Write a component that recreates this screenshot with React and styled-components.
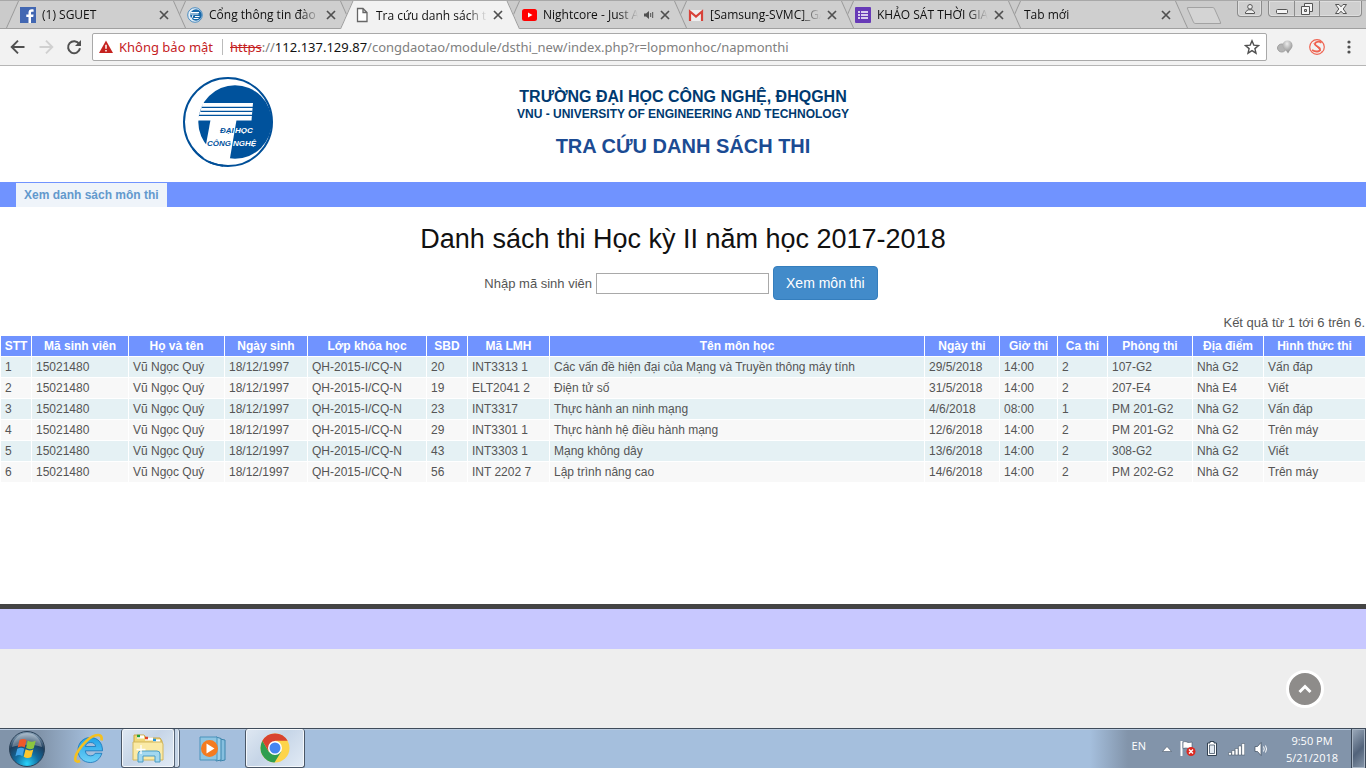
import React from 'react';
import styled, { createGlobalStyle } from 'styled-components';

const Global = createGlobalStyle`
  * { box-sizing: border-box; }
  body { margin: 0; background: #eee; font-family: "Liberation Sans", Arial, sans-serif; color: #555; }
  button, input { font: inherit; }
  button { cursor: pointer; }
`;

const ui = '"Open Sans", "Noto Sans", sans-serif';

const Screen = styled.div`
  min-height: 100vh;
  display: flex;
  flex-direction: column;
  overflow: hidden;
`;

/* ---------- browser frame ---------- */

const TabStrip = styled.div`
  display: flex;
  height: 29px;
  padding: 0 4px 0 6px;
  background: #cbcbcb;
  border-top: 1px solid #a8a8a8;
  border-bottom: 1px solid #a0a0a0;
  font-family: ${ui};
`;

const TabList = styled.div`
  display: flex;
  flex: 1;
  min-width: 0;
`;

const Tab = styled.div`
  position: relative;
  z-index: ${(p) => p.$level};
  display: flex;
  align-items: center;
  flex: 0 1 180px;
  min-width: 0;
  height: ${(p) => (p.$active ? 28 : 27)}px;
  margin-right: -13px;
  padding: 0 17px 0 ${(p) => (p.$bare ? 16 : 14)}px;
  font-size: 12px;
  color: #111;

  &::before,
  &::after {
    content: '';
    position: absolute;
    z-index: -1;
    top: 0;
    bottom: 0;
    background: ${(p) => (p.$active ? '#f2f2f2' : '#cfcfcf')};
    border: 0 solid #999;
  }
  &::before {
    left: 0;
    right: 50%;
    border-left-width: 1px;
    transform: skewX(-24deg);
    transform-origin: bottom left;
  }
  &::after {
    left: 40%;
    right: 0;
    border-right-width: 1px;
    transform: skewX(24deg);
    transform-origin: bottom right;
  }
`;

const TabTitle = styled.span`
  flex: 1;
  min-width: 0;
  margin: 0 6px 0 ${(p) => (p.$bare ? 0 : 6)}px;
  overflow: hidden;
  white-space: nowrap;
  mask-image: linear-gradient(to right, #000 calc(100% - 20px), transparent);
`;

const PlainButton = styled.button`
  display: flex;
  align-items: center;
  justify-content: center;
  padding: 0;
  border: 0;
  background: none;
  flex: none;
`;

const TabClose = styled(PlainButton)`
  svg + & { margin-left: 6px; }
`;

const NewTab = styled.button`
  width: 28px;
  height: 17px;
  margin: 6px 0 0 15px;
  padding: 0;
  background: #d4d4d4;
  border: 1px solid #a2a2a2;
  border-radius: 2px;
  transform: skewX(24deg);
`;

const WindowGroup = styled.div`
  display: flex;
  height: 16px;
  margin-left: 6px;
  border: 1px solid #8c8c8c;
  border-top: 0;
  border-radius: 0 0 4px 4px;
  background: #cfcfcf;
  box-shadow: inset 0 0 0 1px #dedede;
`;

const WindowButton = styled(PlainButton)`
  width: ${(p) => p.$width}px;
  & + & { border-left: 1px solid #8c8c8c; }
`;

const Toolbar = styled.div`
  display: flex;
  align-items: center;
  height: 37px;
  padding: 0 9px 0 8px;
  background: #f2f2f2;
  border-bottom: 1px solid #b6b6b6;
  font-family: "Noto Sans", "Open Sans", sans-serif;
`;

const NavButton = styled(PlainButton)`
  width: 20px;
  height: 20px;
  margin-right: 8px;
`;

const AddressBar = styled.div`
  display: flex;
  align-items: center;
  flex: 1;
  height: 28px;
  min-width: 0;
  padding: 0 6px;
  background: #fff;
  border: 1px solid #a9a9a9;
  border-radius: 2px;
  font-size: 13px;
  white-space: nowrap;
`;

const Insecure = styled.span`
  margin-left: 6px;
  padding-right: 9px;
  border-right: 1px solid #bbb;
  line-height: 16px;
  color: #c5221f;
`;

const Url = styled.span`
  flex: 1;
  min-width: 0;
  margin-left: 7px;
  overflow: hidden;
  color: #808080;
  s { color: #c5221f; }
  b { color: #111; font-weight: 400; }
`;

const ToolbarActions = styled.div`
  display: flex;
  align-items: center;
  gap: 16px;
  padding-left: 10px;
`;

/* ---------- page ---------- */

const Page = styled.main`
  flex: 1;
  display: flex;
  flex-direction: column;
  background: #eee;
`;

const Sheet = styled.div`
  background: #fff;
  padding-bottom: 121px;
`;

const Header = styled.header`
  display: grid;
  grid-template-columns: 1fr auto 1fr;
  align-items: start;
  height: 116px;
  padding-top: 11px;
`;

const LogoSlot = styled.div`
  display: flex;
  justify-content: center;
  padding-right: 60px;
`;

const Heading = styled.div`
  padding-top: 11px;
  text-align: center;
  font-weight: 700;
  color: #003a70;
`;

const SchoolName = styled.p`
  margin: 0;
  font-size: ${(p) => p.$size}px;
  line-height: ${(p) => p.$line}px;
`;

const SiteTitle = styled.h2`
  margin: 12px 0 0;
  font-size: 20px;
  line-height: 24px;
  color: #1b4b93;
`;

const NavBar = styled.nav`
  height: 25px;
  padding: 1px 16px 0;
  background: #7093ff;
`;

const NavLink = styled.a`
  display: inline-block;
  padding: 0 8px;
  background: #eff4fa;
  color: #6399cd;
  font-size: 12px;
  font-weight: 700;
  line-height: 24px;
  text-decoration: none;
`;

const PageTitle = styled.h1`
  margin: 16px 0 10px;
  font-size: 27px;
  font-weight: 400;
  line-height: 33px;
  text-align: center;
  color: #111;
`;

const SearchForm = styled.form`
  display: flex;
  align-items: baseline;
  justify-content: center;
  gap: 4px;
  padding-right: 4px;
  font-size: 13px;
`;

const StudentInput = styled.input`
  width: 173px;
  height: 21px;
  padding: 1px 2px;
  border: 1px solid #a9a9a9;
  background: #fff;
`;

const SubmitButton = styled.button`
  height: 34px;
  padding: 0 12px;
  border: 1px solid #357ebd;
  border-radius: 4px;
  background: #428bca;
  color: #fff;
  font-size: 14px;
`;

const Summary = styled.p`
  margin: 14px 1px 3px;
  font-size: 13px;
  line-height: 18px;
  text-align: right;
`;

const Table = styled.table`
  width: 100%;
  table-layout: fixed;
  border-collapse: separate;
  border-spacing: 1px;
  font-size: 12px;
  line-height: 14px;

  th, td {
    height: 20px;
    padding: 3px 4px;
    overflow: hidden;
    white-space: nowrap;
    text-align: left;
  }
  th {
    padding: 3px 0;
    background: #7093ff;
    color: #fff;
    text-align: center;
  }
  td { background: #f8f8f8; }
  tbody tr:nth-child(odd) td { background: #e5f1f4; }
`;

const Footer = styled.footer`
  height: 45px;
  background: #c8c8ff;
  border-top: 5px solid #444;
`;

const ToTop = styled.button`
  position: fixed;
  right: 42px;
  bottom: 60px;
  width: 38px;
  height: 38px;
  padding: 0;
  display: flex;
  align-items: center;
  justify-content: center;
  border: 3px solid #fff;
  border-radius: 50%;
  background: #8e8c8a;
`;

/* ---------- taskbar ---------- */

const Taskbar = styled.div`
  display: flex;
  align-items: stretch;
  height: 40px;
  background: linear-gradient(to right, #8194aa 0, #8194aa 40px, #a5bfdd 92px, #a5bfdd calc(100% - 276px), #8294aa calc(100% - 238px), #8294aa);
  border-top: 1px solid #3f4b5a;
  box-shadow: inset 0 1px 0 #b9cbe0;
  font-family: ${ui};
  font-size: 12px;
  color: #fff;
`;

const TaskButton = styled(PlainButton)`
  width: ${(p) => p.$width}px;
  margin-left: ${(p) => p.$gap || 0}px;
  ${(p) => p.$open && `
    background: linear-gradient(135deg, #dfe8f2, #c6d5e7 45%, #e2ebf5);
    border: 1px solid #4a5767;
    border-top: 0;
    border-radius: 3px;
    box-shadow: inset 0 0 0 1px #f4f8fc;
  `}
`;

const StackEdge = styled.div`
  width: 6px;
  margin-left: -1px;
  border: 1px solid #566577;
  border-top: 0;
  border-radius: 0 3px 3px 0;
  background: #c4d4e6;
  box-shadow: inset -1px 0 0 #eaf1f8;
`;

const Tray = styled.div`
  display: flex;
  align-items: center;
  margin-left: auto;
  gap: 8px;
  svg { display: block; }
`;

const Language = styled.span`
  padding: 0 8px 6px 0;
  font-size: 11px;
`;

const Clock = styled.div`
  width: 62px;
  margin-left: 4px;
  line-height: 17px;
  font-size: 11px;
  text-align: center;
`;

const ShowDesktop = styled.button`
  align-self: stretch;
  width: 15px;
  padding: 0;
  border: 1px solid #3c4858;
  border-width: 0 1px 0 1px;
  background: linear-gradient(135deg, #9dabbc, #52637a 55%, #8797aa);
  box-shadow: inset 0 0 0 1px #a9b6c5;
`;

/* ---------- icons ---------- */

const Close = () => (
  <svg width="10" height="10" viewBox="0 0 10 10"><path d="M1 1l8 8M9 1L1 9" stroke="#505050" strokeWidth="1.7" /></svg>
);
const Facebook = () => (
  <svg width="16" height="16" viewBox="0 0 16 16"><rect width="16" height="16" fill="#4267b2" /><path d="M11 16V9.900h2.200l.4-2.500H11V6c0-.8.300-1.300 1.300-1.300h1.300V2.400C13.300 2.300 12.600 2.200 11.800 2.200 9.800 2.200 8.500 3.400 8.500 5.600v1.800H6.300v2.500h2.200V16z" fill="#fff" /></svg>
);
const Globe = () => (
  <svg width="16" height="16" viewBox="0 0 16 16"><circle cx="8" cy="8" r="7.300" fill="#e4eff8" stroke="#4d8dc0" /><circle cx="9" cy="8" r="5.800" fill="#1767a8" /><path d="M4 5.500h8M3.500 7h8M6 8l-1.500 4M6.500 11.500h5M8 9.500h4.500" stroke="#fff" strokeWidth="1" fill="none" /></svg>
);
const Doc = () => (
  <svg width="16" height="16" viewBox="0 0 16 16"><path d="M3.500 1.500h5.500l4 4v9H3.500zM9 1.500v4h4" fill="#fff" stroke="#666" strokeWidth="1.300" /></svg>
);
const YouTube = () => (
  <svg width="16" height="16" viewBox="0 0 16 16"><rect x="1" y="2" width="15" height="12" rx="2.500" fill="#f00" /><path d="M7 5.500l4.500 2.500L7 10.500z" fill="#fff" /></svg>
);
const Gmail = () => (
  <svg width="16" height="16" viewBox="0 0 16 16"><rect x="1" y="3" width="14" height="11" fill="#eee" /><path d="M2 14V4.500l6 5 6-5V14" fill="none" stroke="#d8433a" strokeWidth="2.200" /></svg>
);
const Forms = () => (
  <svg width="16" height="16" viewBox="0 0 16 16"><rect width="16" height="16" rx="1" fill="#673ab7" /><path d="M3 5h2M3 8h2M3 11h2M6 5h7M6 8h7M6 11h7" stroke="#fff" strokeWidth="1.700" /></svg>
);
const Speaker = () => (
  <svg width="10" height="10" viewBox="0 0 10 10"><path d="M0 3.500h2L5 1v8L2 6.500H0z" fill="#505050" /><path d="M6.700 3v4M8.700 2v6" stroke="#505050" /></svg>
);
const Back = ({ color, flip }) => (
  <svg width="16" height="16" viewBox="0 0 16 16"><path d={flip ? 'M1.500 8h12.500M8 1.700L14.300 8 8 14.300' : 'M14.500 8H2M8 1.700L1.700 8 8 14.300'} fill="none" stroke={color} strokeWidth="1.900" /></svg>
);
const Reload = () => (
  <svg width="16" height="16" viewBox="0 0 16 16"><path d="M13.200 5A6 6 0 1 0 14 9.300" fill="none" stroke="#505050" strokeWidth="2" /><path d="M15 1v6H9z" fill="#505050" /></svg>
);
const Warning = () => (
  <svg width="14" height="14" viewBox="0 0 14 14"><path d="M7 .5L14 13H0z" fill="#c5221f" /><path d="M7 4.800v4M7 10v1.600" stroke="#fff" strokeWidth="1.500" /></svg>
);
const Star = () => (
  <svg width="16" height="16" viewBox="0 0 16 16"><path d="M8 1.800l1.800 4.300 4.700.4-3.600 3.100 1.100 4.600L8 11.700l-4 2.500 1.100-4.600L1.500 6.500l4.700-.4z" fill="none" stroke="#505050" strokeWidth="1.400" /></svg>
);
const Balls = () => (
  <svg width="16" height="16" viewBox="0 0 16 16">
    <defs><radialGradient id="ball" cx="45%" cy="25%" r="75%"><stop stopColor="#ececec" /><stop offset="1" stopColor="#858585" /></radialGradient></defs>
    <ellipse cx="4.800" cy="9" rx="4.300" ry="4" fill="#b4b4b4" stroke="#a0a0a0" /><path d="M10.500 1.500a5 5 0 0 1 5 4.700c0 3.300-2.500 4.300-4.500 8.300C10 11.500 5.500 10 5.500 6.200a5 5 0 0 1 5-4.700z" fill="url(#ball)" />
  </svg>
);
const SBadge = () => (
  <svg width="16" height="16" viewBox="0 0 16 16" fill="none" stroke="#ef6351"><circle cx="8" cy="8" r="7.300" strokeWidth="1.200" /><path d="M12.500 3.800C10 2 6 2.500 6 5c0 2.600 5.500 2.500 5 5.500-.4 2.500-4.500 2.700-8 .5" strokeWidth="1.800" /><path d="M4.500 4.500l8 8" strokeWidth=".8" /></svg>
);
const Dots = () => (
  <svg width="16" height="16" viewBox="0 0 16 16" fill="#505050"><circle cx="8" cy="3" r="1.600" /><circle cx="8" cy="8" r="1.600" /><circle cx="8" cy="13" r="1.600" /></svg>
);
const Person = () => (
  <svg width="12" height="12" viewBox="0 0 12 12" fill="#eee" stroke="#555"><circle cx="6" cy="3.800" r="2.300" /><path d="M1.500 10.500V9L4 6.800h4L10.500 9v1.500z" /></svg>
);
const Minimize = () => (
  <svg width="14" height="12" viewBox="0 0 14 12"><rect x="1.500" y="6.500" width="11" height="4" rx="1" fill="#f4f4f4" stroke="#555" /></svg>
);
const Restore = () => (
  <svg width="14" height="14" viewBox="0 0 14 14" fill="#f4f4f4" stroke="#555"><path d="M4.500 1.500h8v8h-8z" /><path d="M1.500 4.500h8v8h-8z" /><path d="M4.500 7.500h2v2h-2z" fill="#cfcfcf" /></svg>
);
const WinClose = () => (
  <svg width="14" height="12" viewBox="0 0 14 12"><path d="M1.500 1.500h3.500L7 3.800l2-2.300h3.500L9.200 6l3.300 4.500H9L7 8.200l-2 2.300H1.500L4.800 6z" fill="#f4f4f4" stroke="#555" /></svg>
);

const LogoText = styled.text`
  font: italic 700 8px "Liberation Sans", Arial, sans-serif;
  fill: ${(p) => p.$fill};
`;

const SchoolLogo = () => (
  <svg width="90" height="90" viewBox="0 0 90 90" role="img" aria-label="Đại học Công nghệ">
    <circle cx="45" cy="45" r="44" fill="#fff" stroke="#004f98" strokeWidth="2" />
    <circle cx="52" cy="45" r="36.700" fill="#00529c" />
    <path d="M27.500 43L20 84h26.500L53.500 43z" fill="#fff" />
    <path d="M20 26h50l-1.500 17.500H14z" fill="#fff" />
    <path d="M19 30.300h51M17.500 34.300h52M16 38.300h53.500" stroke="#00529c" strokeWidth="1.300" />
    <path d="M40 88.700A44 44 0 0 1 10 72" fill="none" stroke="#004f98" strokeWidth="2" />
    <LogoText x="37" y="56" $fill="#00529c">ĐẠI</LogoText>
    <LogoText x="52" y="56" $fill="#fff">HỌC</LogoText>
    <LogoText x="24" y="69" $fill="#00529c">CÔNG</LogoText>
    <LogoText x="50" y="69" $fill="#fff">NGHỆ</LogoText>
  </svg>
);

const StartOrb = () => (
  <svg width="38" height="38" viewBox="0 0 38 38">
    <defs>
      <radialGradient id="orb" cx="50%" cy="92%" r="85%"><stop offset="0" stopColor="#27d3fb" /><stop offset=".4" stopColor="#126c9f" /><stop offset=".75" stopColor="#1d3d5c" /><stop offset="1" stopColor="#7d97ae" /></radialGradient>
    </defs>
    <circle cx="19" cy="19" r="17.500" fill="url(#orb)" stroke="#2b4157" />
    <path d="M4 17C6 7 13 3 19 3s13 4 15 14c-9-3-20-3-30 0z" fill="#fff" opacity=".3" />
    <path d="M11.500 10c2.500-1.500 5-1.500 7 0l-1.800 7.500c-2-1.500-4.500-1.500-7 0z" fill="#f0592a" />
    <path d="M19.700 10.500c2.500 1.600 5 1.600 8 .2l-2 7.600c-2.500 1.300-5.300 1.300-7.600-.2z" fill="#8cc63f" />
    <path d="M9.300 18.700c2.500-1.400 5-1.400 7 0l-1.900 7.500c-2-1.500-4.500-1.500-7 0z" fill="#42a5e8" />
    <path d="M17.600 19.300c2.300 1.500 5 1.500 7.700.2l-2 7.500c-2.700 1.400-5.200 1.300-7.600-.2z" fill="#fdc72e" />
  </svg>
);
const Explorer = () => (
  <svg width="32" height="34" viewBox="0 0 32 34">
    <defs><linearGradient id="ie" x2="0" y2="1"><stop stopColor="#1fa2e8" /><stop offset="1" stopColor="#6fd0f7" /></linearGradient></defs>
    <path d="M29.500 18.800H12.300c.3 3.400 2.300 5 5.200 5 2.200 0 3.700-.8 4.700-2.500h6.700C27 27 22.800 30.500 17.400 30.500 10.300 30.500 5 25.500 5 18.200S10.300 5.500 17.400 5.500c7.300 0 12.200 5.300 12.100 13.300zM22.700 14.500c-.4-2.500-2.200-4-5-4s-4.800 1.500-5.300 4z" fill="url(#ie)" stroke="#1674b7" strokeWidth=".8" />
    <path d="M28.500 8.500c1-5-2-6.500-6.500-5C15 5.500 4.500 17.500 2.500 25c-1 4 1 5.500 4.500 4" fill="none" stroke="#f4c020" strokeWidth="2.600" />
  </svg>
);
const Folder = () => (
  <svg width="34" height="32" viewBox="0 0 34 32">
    <path d="M3 3h10l2 3h14l2 3v18H3z" fill="#f0d778" stroke="#c8a544" />
    <path d="M6 5h7M14 7h8M22 9h7" stroke="#fff" strokeWidth="3" />
    <path d="M6 4h3" stroke="#20a038" strokeWidth="2.500" /><path d="M14 6h3" stroke="#e04428" strokeWidth="2.500" /><path d="M22 8h3" stroke="#2196e0" strokeWidth="2.500" />
    <path d="M2 10h29l1 2v16H2z" fill="#faeaa6" stroke="#d3b75c" />
    <path d="M7 30v-8q0-3 3-3h16q3 0 3 3v8h-5v-6H12v6z" fill="#a2d8f0" stroke="#4a9cc4" />
    <path d="M10 13v9M5.500 17.500h9" stroke="#fff" strokeWidth="1.300" />
  </svg>
);
const Media = () => (
  <svg width="30" height="28" viewBox="0 0 30 28">
    <path d="M22 4l5 1v20l-5 1z" fill="#86bfdf" stroke="#3d85ad" /><path d="M18 2l5 1.500V25l-5 1z" fill="#9fd0e9" stroke="#3d85ad" />
    <path d="M2 2h17v23H2z" fill="#8ec5e2" stroke="#4b93bb" />
    <circle cx="11.500" cy="13.500" r="8.500" fill="#f47b20" /><path d="M8.500 8.500l8 5-8 5z" fill="#fff" />
  </svg>
);
const Chrome = () => (
  <svg width="30" height="30" viewBox="0 0 30 30">
    <circle cx="15" cy="15" r="14.500" fill="#fdd44b" />
    <path d="M2.400 7.800A14.500 14.500 0 0 0 14.500 29.500L21.300 18.600 15 15 8.700 18.600z" fill="#2e9e4f" />
    <path d="M2.400 7.800A14.500 14.500 0 0 1 27.600 7.800H15L8.700 18.600z" fill="#d8432f" />
    <circle cx="15" cy="15" r="7" fill="#fff" /><circle cx="15" cy="15" r="5.500" fill="#4485f0" />
  </svg>
);
const ArrowUp = () => (
  <svg width="10" height="6" viewBox="0 0 10 6"><path d="M5 .5L9.500 5.500h-9z" fill="#fff" stroke="#4a5869" strokeWidth=".6" /></svg>
);
const Flag = () => (
  <svg width="16" height="17" viewBox="0 0 16 17"><path d="M1.500 1v15" stroke="#fff" strokeWidth="2" /><path d="M3 2c3-1.500 4 1 6.500.5L12 2v6c-3 1.500-5-1-9 .5z" fill="#fff" stroke="#44566a" strokeWidth=".6" /><circle cx="11" cy="11.500" r="4.500" fill="#dc2820" /><path d="M9 9.500l4 4M13 9.500l-4 4" stroke="#fff" strokeWidth="1.400" /></svg>
);
const Battery = () => (
  <svg width="16" height="17" viewBox="0 0 16 17"><path d="M6 1.500h4V3h2.500v12.500h-9V3H6z" fill="#fff" stroke="#334252" /><path d="M5.500 5h5v8.500h-5z" fill="#e4ebf2" stroke="#445568" strokeWidth=".8" /></svg>
);
const Signal = () => (
  <svg width="17" height="16" viewBox="0 0 17 16" fill="#fff" stroke="#3d4c5d" strokeWidth=".5"><path d="M.5 11.500h3V14h-3zM3.800 9.500h3V14h-3zM7.100 7.500h3V14h-3zM10.400 5h3v9h-3zM13.700 2.500h3V14h-3z" /></svg>
);
const Volume = () => (
  <svg width="16" height="16" viewBox="0 0 16 16"><path d="M2 5.500h2.500L8 1.500v13l-3.500-4H2z" fill="#fff" stroke="#3d4c5d" strokeWidth=".7" /><path d="M10.500 5.500q1.500 2.500 0 5M12.500 4.500q2 3.500 0 7" fill="none" stroke="#fff" /></svg>
);

/* ---------- data ---------- */

const tabs = [
  { title: '(1) SGUET', icon: <Facebook /> },
  { title: 'Cổng thông tin đào tạo', icon: <Globe /> },
  { title: 'Tra cứu danh sách thi', icon: <Doc />, active: true },
  { title: 'Nightcore - Just A', icon: <YouTube />, audio: true },
  { title: '[Samsung-SVMC]_GA', icon: <Gmail /> },
  { title: 'KHẢO SÁT THỜI GIAN', icon: <Forms /> },
  { title: 'Tab mới' },
];

const columns = [
  ['STT', 30], ['Mã sinh viên', 96], ['Họ và tên', 95], ['Ngày sinh', 82], ['Lớp khóa học', 118],
  ['SBD', 40], ['Mã LMH', 81], ['Tên môn học', null], ['Ngày thi', 74], ['Giờ thi', 57],
  ['Ca thi', 49], ['Phòng thi', 84], ['Địa điểm', 70], ['Hình thức thi', 101],
];

const student = ['15021480', 'Vũ Ngọc Quý', '18/12/1997', 'QH-2015-I/CQ-N'];

const exams = [
  ['20', 'INT3313 1', 'Các vấn đề hiện đại của Mạng và Truyền thông máy tính', '29/5/2018', '14:00', '2', '107-G2', 'Nhà G2', 'Vấn đáp'],
  ['19', 'ELT2041 2', 'Điện tử số', '31/5/2018', '14:00', '2', '207-E4', 'Nhà E4', 'Viết'],
  ['23', 'INT3317', 'Thực hành an ninh mạng', '4/6/2018', '08:00', '1', 'PM 201-G2', 'Nhà G2', 'Vấn đáp'],
  ['29', 'INT3301 1', 'Thực hành hệ điều hành mạng', '12/6/2018', '14:00', '2', 'PM 201-G2', 'Nhà G2', 'Trên máy'],
  ['43', 'INT3303 1', 'Mạng không dây', '13/6/2018', '14:00', '2', '308-G2', 'Nhà G2', 'Viết'],
  ['56', 'INT 2202 7', 'Lập trình nâng cao', '14/6/2018', '14:00', '2', 'PM 202-G2', 'Nhà G2', 'Trên máy'],
];

export default function App() {
  return (
    <Screen>
      <Global />
      <TabStrip>
        <TabList>
          {tabs.map((t, i) => (
            <Tab key={t.title} $active={t.active} $bare={!t.icon} $level={t.active ? 20 : 10 - i}>
              {t.icon}
              <TabTitle $bare={!t.icon}>{t.title}</TabTitle>
              {t.audio && <Speaker />}
              <TabClose type="button" aria-label="Đóng"><Close /></TabClose>
            </Tab>
          ))}
          <NewTab type="button" aria-label="Thẻ mới" />
        </TabList>
        <WindowGroup><WindowButton type="button" $width={23} aria-label="Hồ sơ"><Person /></WindowButton></WindowGroup>
        <WindowGroup>
          <WindowButton type="button" $width={25} aria-label="Thu nhỏ"><Minimize /></WindowButton>
          <WindowButton type="button" $width={25} aria-label="Khôi phục"><Restore /></WindowButton>
          <WindowButton type="button" $width={42} aria-label="Đóng cửa sổ"><WinClose /></WindowButton>
        </WindowGroup>
      </TabStrip>
      <Toolbar>
        <NavButton type="button" aria-label="Quay lại"><Back color="#505050" /></NavButton>
        <NavButton type="button" aria-label="Tiến"><Back color="#d0d0d0" flip /></NavButton>
        <NavButton type="button" aria-label="Tải lại"><Reload /></NavButton>
        <AddressBar>
          <Warning />
          <Insecure>Không bảo mật</Insecure>
          <Url><s>https</s>://<b>112.137.129.87</b>/congdaotao/module/dsthi_new/index.php?r=lopmonhoc/napmonthi</Url>
          <PlainButton type="button" aria-label="Đánh dấu"><Star /></PlainButton>
        </AddressBar>
        <ToolbarActions>
          <PlainButton type="button" aria-label="Tiện ích"><Balls /></PlainButton>
          <PlainButton type="button" aria-label="Tiện ích S"><SBadge /></PlainButton>
          <PlainButton type="button" aria-label="Trình đơn"><Dots /></PlainButton>
        </ToolbarActions>
      </Toolbar>

      <Page>
        <Sheet>
          <Header>
            <LogoSlot><SchoolLogo /></LogoSlot>
            <Heading>
              <SchoolName $size={16} $line={18}>TRƯỜNG ĐẠI HỌC CÔNG NGHỆ, ĐHQGHN</SchoolName>
              <SchoolName $size={12} $line={16}>VNU - UNIVERSITY OF ENGINEERING AND TECHNOLOGY</SchoolName>
              <SiteTitle>TRA CỨU DANH SÁCH THI</SiteTitle>
            </Heading>
          </Header>
          <NavBar><NavLink href="#mon-thi">Xem danh sách môn thi</NavLink></NavBar>
          <PageTitle>Danh sách thi Học kỳ II năm học 2017-2018</PageTitle>
          <SearchForm onSubmit={(e) => e.preventDefault()}>
            <label htmlFor="student">Nhập mã sinh viên</label>
            <StudentInput id="student" type="text" />
            <SubmitButton type="submit">Xem môn thi</SubmitButton>
          </SearchForm>
          <Summary>Kết quả từ 1 tới 6 trên 6.</Summary>
          <Table>
            <colgroup>
              {columns.map(([name, width]) => <col key={name} width={width || undefined} />)}
            </colgroup>
            <thead>
              <tr>{columns.map(([name]) => <th key={name} scope="col">{name}</th>)}</tr>
            </thead>
            <tbody>
              {exams.map((exam, i) => (
                <tr key={exam[0]}>
                  {[String(i + 1), ...student, ...exam].map((value, c) => <td key={columns[c][0]}>{value}</td>)}
                </tr>
              ))}
            </tbody>
          </Table>
        </Sheet>
        <Footer />
      </Page>
      <ToTop type="button" aria-label="Lên đầu trang">
        <svg width="14" height="10" viewBox="0 0 14 10"><path d="M1.500 8L7 2.500 12.500 8" fill="none" stroke="#fff" strokeWidth="3" /></svg>
      </ToTop>

      <Taskbar>
        <TaskButton type="button" $width={38} $gap={8} aria-label="Start"><StartOrb /></TaskButton>
        <TaskButton type="button" $width={32} $gap={27} aria-label="Internet Explorer"><Explorer /></TaskButton>
        <TaskButton type="button" $width={54} $gap={16} $open aria-label="Windows Explorer"><Folder /></TaskButton>
        <StackEdge />
        <TaskButton type="button" $width={30} $gap={18} aria-label="Media Player"><Media /></TaskButton>
        <TaskButton type="button" $width={60} $gap={17} $open aria-label="Chrome"><Chrome /></TaskButton>
        <Tray>
          <Language>EN</Language>
          <ArrowUp /><Flag /><Battery /><Signal /><Volume />
          <Clock>9:50 PM<br />5/21/2018</Clock>
          <ShowDesktop type="button" aria-label="Hiện màn hình nền" />
        </Tray>
      </Taskbar>
    </Screen>
  );
}
